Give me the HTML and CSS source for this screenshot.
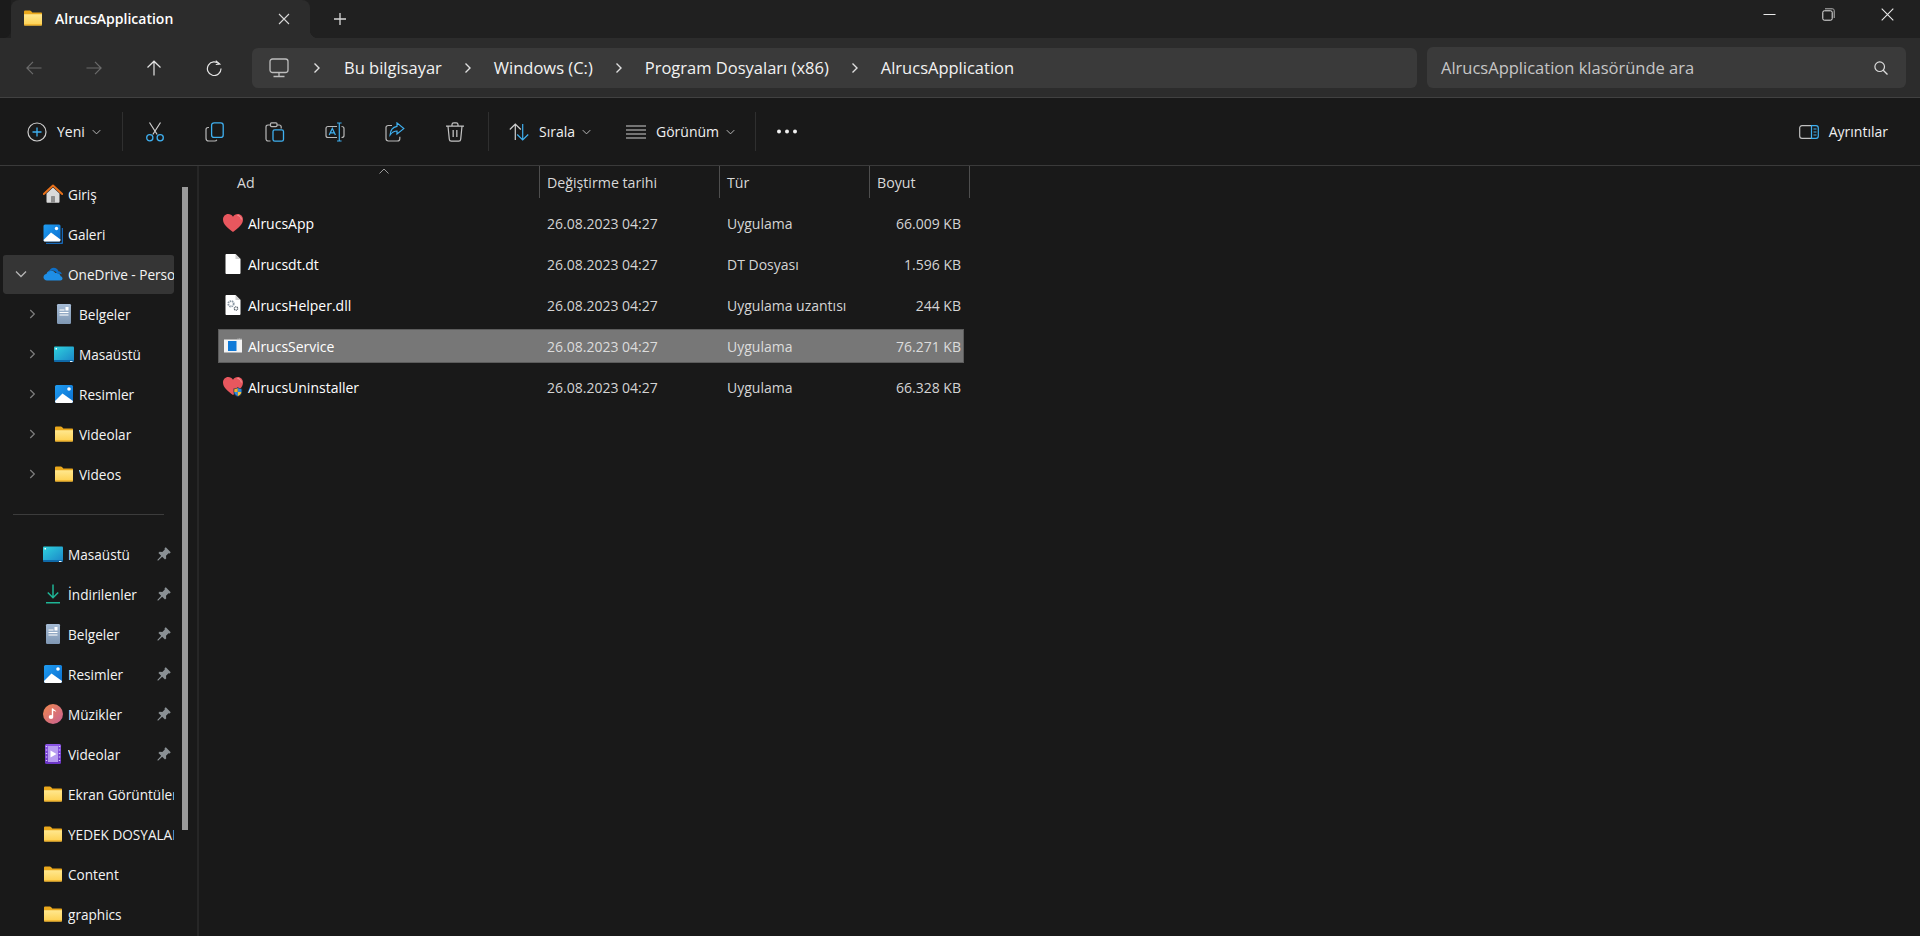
FILE: index.html
```html
<!DOCTYPE html>
<html lang="tr">
<head>
<meta charset="utf-8">
<title>AlrucsApplication</title>
<link rel="stylesheet" href="styles.css">
</head>
<body>
<svg class="defs" width="0" height="0" aria-hidden="true">
  <defs>
    <linearGradient id="gFolder" x1="0" y1="0" x2="0" y2="1"><stop offset="0" stop-color="#ffe88f"/><stop offset="1" stop-color="#fdd050"/></linearGradient>
    <linearGradient id="gDoc" x1="0" y1="0" x2="0" y2="1"><stop offset="0" stop-color="#a6bcd6"/><stop offset="1" stop-color="#7f97b3"/></linearGradient>
    <linearGradient id="gDesk" x1="0" y1="0" x2="1" y2="1"><stop offset="0" stop-color="#2fd3de"/><stop offset="1" stop-color="#1b86c8"/></linearGradient>
    <linearGradient id="gPic" x1="0" y1="0" x2="1" y2="1"><stop offset="0" stop-color="#1f9cf0"/><stop offset="1" stop-color="#0b6fd1"/></linearGradient>
    <linearGradient id="gMusic" x1="0" y1="0" x2="1" y2="1"><stop offset="0" stop-color="#f0894e"/><stop offset="1" stop-color="#c75f94"/></linearGradient>
    <linearGradient id="gVideo" x1="0" y1="0" x2="0" y2="1"><stop offset="0" stop-color="#8b56e6"/><stop offset="1" stop-color="#6a34c4"/></linearGradient>
    <symbol id="i-folder" viewBox="0 0 20 16">
      <path d="M1 1.800C1 1 1.600.5 2.300.5h4.500c.5 0 .9.2 1.200.6L9.300 2.500H18c.6 0 1 .4 1 1V6H1z" fill="#eaa81c"/>
      <path d="M1 4.200h18v10.200c0 .6-.4 1-1 1H2c-.6 0-1-.4-1-1z" fill="url(#gFolder)"/>
      <path d="M1 14.300h18v.2c0 .6-.4 1-1 1H2c-.6 0-1-.4-1-1z" fill="#eeb02a"/>
    </symbol>
    <symbol id="i-home" viewBox="0 0 20 20">
      <path d="M3.500 9.500 10 3.500l6.500 6v8.300c0 .6-.4 1-1 1h-11c-.6 0-1-.4-1-1z" fill="#d9d9d9"/>
      <path d="M8 18.800v-6c0-.4.3-.7.7-.7h2.600c.4 0 .7.3.7.7v6z" fill="#8e8e8e"/>
      <path d="M.8 10 10 1.500 19.200 10" fill="none" stroke="#e8701a" stroke-width="2" stroke-linecap="round" stroke-linejoin="round"/>
    </symbol>
    <symbol id="i-gallery" viewBox="0 0 20 20">
      <path d="M3 19.500h15c1 0 1.500-.6 1.500-1.500V4" fill="none" stroke="#1668b8" stroke-width="1.500"/>
      <rect x=".5" y=".5" width="17" height="17" rx="1.500" fill="url(#gPic)"/>
      <path d="M.5 16 8 8.500 17.500 15.500V16c0 .9-.6 1.500-1.500 1.500H2c-.9 0-1.500-.6-1.500-1.500z" fill="#fff"/>
      <circle cx="13.500" cy="4.500" r="1.700" fill="#fff"/>
    </symbol>
    <symbol id="i-cloud" viewBox="0 0 20 14">
      <path d="M4 13.500c-2 0-3.500-1.400-3.500-3.200C.5 8.600 1.800 7.300 3.400 7.100 4 4.800 5.900 3.500 8 3.500c1.900 0 3.400 1 4.200 2.600 2.900-.6 5.200 1 5.400 3.200 1.100.3 1.900 1.200 1.900 2.200 0 1.100-.9 2-2.100 2z" fill="#1e8ee6"/>
      <path d="M5.600 5.600C6.400 2.500 8.400.8 10.800.8c2.200 0 3.900 1.300 4.700 3.400 1.900.1 3 1.300 3.300 3.100-1.400-.5-2.900-.9-4.700-.9-1-1.700-2.700-2.800-4.700-2.800-1.300 0-2.700.6-3.800 2z" fill="#0f6fc6"/>
    </symbol>
    <symbol id="i-doc" viewBox="0 0 16 20">
      <rect x="1" y="0" width="14" height="20" rx="1.200" fill="url(#gDoc)"/>
      <path d="M3.500 6h5M3.500 8.500h9M3.500 11h9" stroke="#fff" stroke-width="1.100"/>
      <rect x="9.500" y="3" width="3" height="3.500" fill="#fff"/>
    </symbol>
    <symbol id="i-desktop" viewBox="0 0 20 16">
      <rect x="0" y=".5" width="20" height="14.500" rx="1" fill="url(#gDesk)"/>
      <path d="M0 14h20v1c0 .5-.4 1-1 1H1c-.6 0-1-.5-1-1z" fill="#0f6aa8"/>
      <rect x="1.500" y="2" width="1.500" height="1.500" fill="#fff"/>
      <rect x="16" y="15" width="2.500" height="1" fill="#e8f4ff"/>
    </symbol>
    <symbol id="i-pic" viewBox="-1 -1 20 20">
      <rect x="0" y="0" width="18" height="18" rx="1.500" fill="url(#gPic)"/>
      <path d="M0 16 7.500 8.500 18 16c0 1.200-.6 2-1.500 2h-15C.6 18 0 17.200 0 16z" fill="#fff"/>
      <circle cx="14" cy="4" r="1.800" fill="#fff"/>
    </symbol>
    <symbol id="i-down" viewBox="0 0 16 20">
      <path d="M8 .5v13M2.800 8.500 8 13.800l5.200-5.300M1 18.800h14" fill="none" stroke="#1fb596" stroke-width="1.500"/>
    </symbol>
    <symbol id="i-music" viewBox="0 0 20 20">
      <circle cx="10" cy="10" r="10" fill="url(#gMusic)"/>
      <path d="M9.500 4.500v8" stroke="#fff" stroke-width="1.400"/>
      <path d="M9.500 4.200c1.500 1.800 3.400 1.800 3.800 3.800-1.200-1-2.500-1.300-3.800-1.200z" fill="#fff"/>
      <ellipse cx="8" cy="13" rx="2.300" ry="2" fill="#fff"/>
    </symbol>
    <symbol id="i-video" viewBox="0 0 16 20">
      <rect x="0" y="0" width="16" height="20" rx="1.500" fill="url(#gVideo)"/>
      <rect x="3" y="2" width="10" height="16" fill="#b79cf0"/>
      <path d="M5.500 6.500 11.500 10l-6 3.500z" fill="#fff"/>
      <path d="M.8 2.500h1.400M.8 6h1.400M.8 9.500h1.400M.8 13h1.400M.8 16.500h1.400M13.800 2.500h1.400M13.800 6h1.400M13.800 9.500h1.400M13.800 13h1.400M13.800 16.500h1.400" stroke="#dcd0fa" stroke-width="1.100"/>
    </symbol>
    <symbol id="i-pin" viewBox="0 0 14 14">
      <path d="M8.800 .3 13.700 5.200 12.700 6.400 11.500 6.200 9 8.700 9.200 11.400 8 12.600 5.200 9.800 1 13.700.3 13 4.200 8.800 1.400 6 2.600 4.800 5.300 5 7.800 2.500 7.600 1.300z" fill="#8a9094"/>
    </symbol>
    <symbol id="i-heart" viewBox="0 0 20 18">
      <path d="M10 18C4.500 14 0 10.500 0 5.600 0 2.300 2.300 0 5.200 0 7.200 0 9 1 10 2.800 11 1 12.800 0 14.800 0 17.700 0 20 2.300 20 5.600 20 10.500 15.500 14 10 18z" fill="#e8575e"/>
      <path d="M14.500 1.500c2 0 3.800 1.500 3.800 4" fill="none" stroke="#f59a9c" stroke-width="1"/>
    </symbol>
    <symbol id="i-page" viewBox="0 0 16 20">
      <path d="M.5 1C.5.500.9 0 1.500 0h9L15.500 5v14c0 .5-.4 1-1 1h-13c-.6 0-1-.5-1-1z" fill="#fff"/>
      <path d="M10.500 0v5h5z" fill="#cfcfcf"/>
    </symbol>
    <symbol id="i-dll" viewBox="0 0 16 20">
      <use href="#i-page" width="16" height="20"/>
      <circle cx="6" cy="8.800" r="2.700" fill="none" stroke="#8d9aa6" stroke-width="1.800" stroke-dasharray="1.500 .7"/>
      <circle cx="11" cy="13.500" r="1.700" fill="none" stroke="#59636c" stroke-width="1.300" stroke-dasharray="1.100 .5"/>
    </symbol>
    <symbol id="i-service" viewBox="0 0 20 20">
      <rect x="1" y="3.500" width="18" height="13" fill="#f4f4f4"/>
      <rect x="5" y="5" width="8.500" height="10" fill="#0f7ad8"/>
      <path d="M15 2.500v1M16.500 2.500v1M18 2.500v1" stroke="#dcdcdc" stroke-width=".8"/>
    </symbol>
    <symbol id="i-uninstall" viewBox="0 0 20 20">
      <use href="#i-heart" width="20" height="18"/>
      <path d="M10.500 11.500c1.800 0 3.300-.5 4.300-1.500 1 1 2.500 1.500 4.400 1.500V15c0 2.500-2 4.300-4.400 5-2.400-.7-4.300-2.500-4.300-5z" fill="#1f3a55"/>
      <path d="M11.300 12.200c1.400 0 2.600-.4 3.500-1.100V15h-3.500z" fill="#f0b429"/>
      <path d="M14.800 11.100c.9.700 2.100 1.100 3.600 1.100V15h-3.600z" fill="#2a89e0"/>
      <path d="M11.300 15h3.500v4.100c-1.800-.6-3.300-2-3.500-4.100z" fill="#2a89e0"/>
      <path d="M14.800 15h3.600c-.2 2.100-1.800 3.500-3.600 4.100z" fill="#f5c33b"/>
    </symbol>
    <symbol id="i-chev-r" viewBox="0 0 10 12"><path d="M2.500 1.500 7 6l-4.500 4.500" fill="none" stroke="currentColor" stroke-width="1.400"/></symbol>
    <symbol id="i-chev-d" viewBox="0 0 12 8"><path d="M1 1.500 6 6.500l5-5" fill="none" stroke="currentColor" stroke-width="1.300"/></symbol>
  </defs>
</svg>

<div class="app">
  <header class="titlebar">
    <div class="tab-stub"></div>
    <div class="tab">
      <svg class="tab-folder"><use href="#i-folder"/></svg>
      <span class="tab-title">AlrucsApplication</span>
      <svg class="tab-x" viewBox="0 0 12 12"><path d="M1 1l10 10M11 1 1 11" stroke="#d8d8d8" stroke-width="1.100" fill="none"/></svg>
    </div>
    <svg class="tab-new" viewBox="0 0 14 14"><path d="M7 1v12M1 7h12" stroke="#d8d8d8" stroke-width="1.300" fill="none"/></svg>
    <div class="winctl">
      <span class="winbtn"><svg width="13" height="13" viewBox="0 0 13 13"><path d="M.5 6.500h12" stroke="#e8e8e8" stroke-width="1"/></svg></span>
      <span class="winbtn"><svg width="13" height="13" viewBox="0 0 13 13"><rect x=".8" y="2.800" width="9.400" height="9.400" rx="1.500" fill="none" stroke="#e8e8e8"/><path d="M3 .8h7.500c1 0 1.700.7 1.700 1.700V10" fill="none" stroke="#b8b8b8"/></svg></span>
      <span class="winbtn"><svg width="13" height="13" viewBox="0 0 13 13"><path d="M.7.700l11.600 11.600M12.300.7.700 12.300" stroke="#e8e8e8" stroke-width="1.100" fill="none"/></svg></span>
    </div>
  </header>

  <nav class="navbar">
    <div class="navbtns">
      <span class="navbtn"><svg viewBox="0 0 16 14"><path d="M15.500 7H1M7 .8.900 7 7 13.200" fill="none" stroke="#6b6b6b" stroke-width="1.200"/></svg></span>
      <span class="navbtn"><svg viewBox="0 0 16 14"><path d="M.5 7H15M9 .8 15.100 7 9 13.200" fill="none" stroke="#6b6b6b" stroke-width="1.200"/></svg></span>
      <span class="navbtn"><svg viewBox="0 0 16 16"><path d="M8 15.500V1.200M1.500 7.500 8 1.200l6.500 6.300" fill="none" stroke="#e4e4e4" stroke-width="1.200"/></svg></span>
      <span class="navbtn"><svg viewBox="0 0 16 16"><path d="M13.300 4.200A6.800 6.800 0 1 0 15 8.500" fill="none" stroke="#e4e4e4" stroke-width="1.200"/><path d="M9.700.8l4 3.300-3.900.4" fill="none" stroke="#e4e4e4" stroke-width="1.200"/></svg></span>
    </div>
    <div class="address">
      <svg class="pc" viewBox="0 0 20 20"><rect x="1" y="1" width="18" height="13.500" rx="2.500" fill="none" stroke="#bdbdbd" stroke-width="1.300"/><path d="M10 14.500V18M4.500 18.500h11" fill="none" stroke="#bdbdbd" stroke-width="1.300"/></svg>
      <svg class="crumb-sep crumb-first"><use href="#i-chev-r"/></svg><span class="crumb">Bu bilgisayar</span>
      <svg class="crumb-sep"><use href="#i-chev-r"/></svg><span class="crumb">Windows (C:)</span>
      <svg class="crumb-sep"><use href="#i-chev-r"/></svg><span class="crumb">Program Dosyaları (x86)</span>
      <svg class="crumb-sep"><use href="#i-chev-r"/></svg><span class="crumb">AlrucsApplication</span>
    </div>
    <div class="search">
      <span class="search-text">AlrucsApplication klasöründe ara</span>
      <svg class="search-ico" viewBox="0 0 14 14"><circle cx="5.700" cy="5.700" r="4.800" fill="none" stroke="#dcdcdc" stroke-width="1.200"/><path d="M9.200 9.200l4.300 4.300" stroke="#dcdcdc" stroke-width="1.300"/></svg>
    </div>
  </nav>

  <section class="toolbar">
    <div class="tool tool-new">
      <svg class="ico20" viewBox="0 0 20 20"><circle cx="10" cy="10" r="9" fill="none" stroke="#cfcfcf" stroke-width="1.200"/><path d="M10 5.500v9M5.500 10h9" stroke="#3fb0f0" stroke-width="1.300"/></svg>
      <span class="tool-label">Yeni</span>
      <svg class="caret"><use href="#i-chev-d"/></svg>
    </div>
    <div class="tsep tsep-a"></div>
    <div class="tool-icon"><svg class="ico20" viewBox="0 0 20 20"><path d="M15.500 .5 7.800 12.500M4.500 .5l7.700 12" fill="none" stroke="#cfcfcf" stroke-width="1.200"/><circle cx="4.800" cy="15.800" r="3.100" fill="none" stroke="#3fb0f0" stroke-width="1.300"/><circle cx="15.200" cy="15.800" r="3.100" fill="none" stroke="#3fb0f0" stroke-width="1.300"/></svg></div>
    <div class="tool-icon"><svg class="ico20" viewBox="0 0 20 20"><path d="M4 5.500H3C1.700 5.500 1 6.400 1 7.600v8.600c0 1.700 1 2.800 2.800 2.800h6c1 0 1.700-.5 2-1.300" fill="none" stroke="#b8b8b8" stroke-width="1.200"/><rect x="6.600" y=".8" width="11.600" height="14.600" rx="2.500" fill="none" stroke="#3fb0f0" stroke-width="1.300"/></svg></div>
    <div class="tool-icon"><svg class="ico20" viewBox="0 0 20 20"><path d="M5.500 19H3.200C1.700 19 1 18 1 16.800V5c0-1.300.8-2 2-2h2.500M12 3h2.200c1.200 0 2 .7 2 2v1.500" fill="none" stroke="#b8b8b8" stroke-width="1.200"/><rect x="5.500" y=".8" width="6.500" height="3.800" rx="1" fill="none" stroke="#b8b8b8" stroke-width="1.200"/><rect x="8" y="7.800" width="10.500" height="11.400" rx="1.800" fill="none" stroke="#3fb0f0" stroke-width="1.300"/></svg></div>
    <div class="tool-icon"><svg class="ico20" viewBox="0 0 20 20"><path d="M12 4.500H3C1.700 4.500 1 5.300 1 6.500v7c0 1.200.7 2 2 2h9M16.500 4.500c1.500 0 2.500.8 2.500 2v7c0 1.200-1 2-2.500 2" fill="none" stroke="#b8b8b8" stroke-width="1.200"/><path d="M14.300 1v18M12 1h4.600M12 19h4.600" stroke="#3fb0f0" stroke-width="1.200" fill="none"/><path d="M4.200 13 7.300 6.500 10.400 13M5.300 10.800h4" fill="none" stroke="#3fb0f0" stroke-width="1.200"/></svg></div>
    <div class="tool-icon"><svg class="ico20" viewBox="0 0 20 20"><path d="M7 3.500H3.200C1.800 3.500 1 4.400 1 5.600v11c0 1.500.8 2.400 2.300 2.400h9c1.600 0 2.500-.8 2.500-2.300v-2" fill="none" stroke="#b8b8b8" stroke-width="1.200"/><path d="M12 .9 18.800 6.600 12 12V9C8.800 9 6.900 10.400 5.100 13 5.300 8.400 8 5 12 4.300z" fill="none" stroke="#3fb0f0" stroke-width="1.200"/></svg></div>
    <div class="tool-icon"><svg class="ico20" viewBox="0 0 20 20"><path d="M1 4.200h18M7 4V2.500C7 1.400 7.800.8 8.800.8h2.400c1 0 1.800.6 1.800 1.700V4M3 4.200l1.300 13c.1 1.200.8 2 2 2h7.400c1.200 0 1.900-.8 2-2l1.300-13" fill="none" stroke="#c4c4c4" stroke-width="1.200"/><path d="M8.200 8v7M11.800 8v7" stroke="#a8a8a8" stroke-width="1.500"/></svg></div>
    <div class="tsep tsep-b"></div>
    <div class="tool tool-sort">
      <svg class="ico20" viewBox="0 0 20 20"><path d="M6.300 18V2.200M.8 7.500 6.300 2l5.500 5.500" fill="none" stroke="#cfcfcf" stroke-width="1.200"/><path d="M13.700 2v16M8.200 12.500l5.500 5.500 5.500-5.500" fill="none" stroke="#3fb0f0" stroke-width="1.200"/></svg>
      <span class="tool-label">Sırala</span>
      <svg class="caret"><use href="#i-chev-d"/></svg>
    </div>
    <div class="tool tool-view">
      <svg class="ico20" viewBox="0 0 20 14"><path d="M0 1h20M0 5h20M0 9h20M0 13h20" stroke="#cfcfcf" stroke-width="1.200"/></svg>
      <span class="tool-label">Görünüm</span>
      <svg class="caret"><use href="#i-chev-d"/></svg>
    </div>
    <div class="tsep"></div>
    <svg class="dots" viewBox="0 0 22 5"><circle cx="3" cy="2.500" r="2" fill="#f0f0f0"/><circle cx="11" cy="2.500" r="2" fill="#f0f0f0"/><circle cx="19" cy="2.500" r="2" fill="#f0f0f0"/></svg>
    <div class="tool tool-details">
      <svg class="ico20" viewBox="0 0 20 14"><path d="M12.500.7H3C1.600.7.700 1.600.7 3v8c0 1.400.9 2.300 2.300 2.300h9.500" fill="none" stroke="#c0c0c0" stroke-width="1.200"/><path d="M12.500.7h4.500c1.400 0 2.300.9 2.300 2.300v8c0 1.400-.9 2.300-2.300 2.300h-4.500z" fill="none" stroke="#3fb0f0" stroke-width="1.200"/><path d="M14.500 4h3M14.500 7h3M14.500 10h3" stroke="#3fb0f0" stroke-width="1.100"/></svg>
      <span class="tool-label">Ayrıntılar</span>
    </div>
  </section>

  <main class="main">
    <aside class="sidebar">
      <div class="scrollthumb"></div>
      <div class="tree">
        <div class="row l1"><span class="chev"></span><svg class="ic"><use href="#i-home"/></svg><span class="lbl">Giriş</span></div>
        <div class="row l1"><span class="chev"></span><svg class="ic"><use href="#i-gallery"/></svg><span class="lbl">Galeri</span></div>
        <div class="row l1 active"><span class="chev"><svg class="chev-down"><use href="#i-chev-d"/></svg></span><svg class="ic"><use href="#i-cloud"/></svg><span class="lbl">OneDrive - Personal</span></div>
        <div class="row l2"><span class="chev"><svg class="chev-right"><use href="#i-chev-r"/></svg></span><svg class="ic"><use href="#i-doc"/></svg><span class="lbl">Belgeler</span></div>
        <div class="row l2"><span class="chev"><svg class="chev-right"><use href="#i-chev-r"/></svg></span><svg class="ic"><use href="#i-desktop"/></svg><span class="lbl">Masaüstü</span></div>
        <div class="row l2"><span class="chev"><svg class="chev-right"><use href="#i-chev-r"/></svg></span><svg class="ic"><use href="#i-pic"/></svg><span class="lbl">Resimler</span></div>
        <div class="row l2"><span class="chev"><svg class="chev-right"><use href="#i-chev-r"/></svg></span><svg class="ic"><use href="#i-folder"/></svg><span class="lbl">Videolar</span></div>
        <div class="row l2"><span class="chev"><svg class="chev-right"><use href="#i-chev-r"/></svg></span><svg class="ic"><use href="#i-folder"/></svg><span class="lbl">Videos</span></div>
      </div>
      <div class="divider"></div>
      <div class="tree">
        <div class="row l1"><span class="chev"></span><svg class="ic"><use href="#i-desktop"/></svg><span class="lbl">Masaüstü</span><svg class="pin"><use href="#i-pin"/></svg></div>
        <div class="row l1"><span class="chev"></span><svg class="ic"><use href="#i-down"/></svg><span class="lbl">İndirilenler</span><svg class="pin"><use href="#i-pin"/></svg></div>
        <div class="row l1"><span class="chev"></span><svg class="ic"><use href="#i-doc"/></svg><span class="lbl">Belgeler</span><svg class="pin"><use href="#i-pin"/></svg></div>
        <div class="row l1"><span class="chev"></span><svg class="ic"><use href="#i-pic"/></svg><span class="lbl">Resimler</span><svg class="pin"><use href="#i-pin"/></svg></div>
        <div class="row l1"><span class="chev"></span><svg class="ic"><use href="#i-music"/></svg><span class="lbl">Müzikler</span><svg class="pin"><use href="#i-pin"/></svg></div>
        <div class="row l1"><span class="chev"></span><svg class="ic"><use href="#i-video"/></svg><span class="lbl">Videolar</span><svg class="pin"><use href="#i-pin"/></svg></div>
        <div class="row l1"><span class="chev"></span><svg class="ic"><use href="#i-folder"/></svg><span class="lbl">Ekran Görüntüleri</span></div>
        <div class="row l1"><span class="chev"></span><svg class="ic"><use href="#i-folder"/></svg><span class="lbl">YEDEK DOSYALAR</span></div>
        <div class="row l1"><span class="chev"></span><svg class="ic"><use href="#i-folder"/></svg><span class="lbl">Content</span></div>
        <div class="row l1"><span class="chev"></span><svg class="ic"><use href="#i-folder"/></svg><span class="lbl">graphics</span></div>
      </div>
    </aside>

    <section class="files">
      <div class="head">
        <svg class="sort-caret" viewBox="0 0 10 6"><path d="M.5 5.500 5 1l4.500 4.500" fill="none" stroke="#9a9a9a"/></svg>
        <div class="hcell hname">Ad</div>
        <div class="hcell hdate">Değiştirme tarihi</div>
        <div class="hcell htype">Tür</div>
        <div class="hcell hsize">Boyut</div>
      </div>
      <div class="file">
        <div class="fname"><svg class="fic"><use href="#i-heart"/></svg>AlrucsApp</div>
        <div class="fcell">26.08.2023 04:27</div><div class="fcell">Uygulama</div><div class="fsize">66.009 KB</div>
      </div>
      <div class="file">
        <div class="fname"><svg class="fic"><use href="#i-page"/></svg>Alrucsdt.dt</div>
        <div class="fcell">26.08.2023 04:27</div><div class="fcell">DT Dosyası</div><div class="fsize">1.596 KB</div>
      </div>
      <div class="file">
        <div class="fname"><svg class="fic"><use href="#i-dll"/></svg>AlrucsHelper.dll</div>
        <div class="fcell">26.08.2023 04:27</div><div class="fcell">Uygulama uzantısı</div><div class="fsize">244 KB</div>
      </div>
      <div class="file selected">
        <div class="fname"><svg class="fic"><use href="#i-service"/></svg>AlrucsService</div>
        <div class="fcell">26.08.2023 04:27</div><div class="fcell">Uygulama</div><div class="fsize">76.271 KB</div>
      </div>
      <div class="file">
        <div class="fname"><svg class="fic"><use href="#i-uninstall"/></svg>AlrucsUninstaller</div>
        <div class="fcell">26.08.2023 04:27</div><div class="fcell">Uygulama</div><div class="fsize">66.328 KB</div>
      </div>
    </section>
  </main>
</div>
</body>
</html>
```

FILE: styles.css
```css
* { box-sizing: border-box; }
html, body { margin: 0; padding: 0; background: #191919; }
body { font-family: "Open Sans", "Noto Sans", "Liberation Sans", sans-serif; color: #fff; overflow: hidden; }
.defs { position: absolute; }
.app { width: 1920px; height: 936px; display: flex; flex-direction: column; overflow: hidden; background: #191919; }

/* title bar */
.titlebar { height: 38px; display: flex; align-items: center; background: #202020; flex: none; }
.tab-stub { width: 11px; height: 38px; background: #1b1b1b; border-bottom-right-radius: 8px; }
.tab { position: relative; width: 299px; height: 38px; display: flex; align-items: center; background: #2c2c2c; border-radius: 8px 8px 0 0; padding-left: 12px; }
.tab::after { content: ""; position: absolute; left: 100%; bottom: 0; width: 8px; height: 8px; background: radial-gradient(circle at 100% 0, transparent 8px, #2c2c2c 8.500px); }
.tab-folder { width: 20px; height: 16px; flex: none; margin-top: -2px; }
.tab-title { margin: -2px 0 0 12px; font-size: 14px; font-weight: 600; color: #fff; }
.tab-x { width: 12px; height: 12px; margin-left: auto; margin-right: 20px; }
.tab-new { width: 14px; height: 14px; margin-left: 23px; }
.winctl { margin-left: auto; display: flex; padding-right: 3px; margin-top: -10px; }
.winbtn { width: 59px; display: flex; justify-content: center; }

/* nav bar */
.navbar { height: 60px; flex: none; display: flex; align-items: center; background: #2c2c2c; border-bottom: 1px solid #414141; padding: 0 14px 0 0; }
.navbtns { display: flex; width: 252px; padding-left: 4px; }
.navbtn { width: 60px; height: 40px; display: flex; align-items: center; justify-content: center; }
.navbtn svg { width: 16px; height: 16px; }
.address { width: 1165px; height: 40px; background: #3a3a3a; border-radius: 6px; display: flex; align-items: center; padding-left: 17px; }
.pc { width: 20px; height: 20px; flex: none; }
.crumb-sep { width: 10px; height: 12px; color: #e0e0e0; flex: none; margin: 0 21px; }
.crumb-first { margin: 0 22px 0 23px; }
.crumb { font-size: 16.500px; line-height: 24px; color: #f2f2f2; white-space: nowrap; }
.search { width: 479px; height: 41px; margin-left: 10px; background: #3a3a3a; border-radius: 6px; display: flex; align-items: center; padding: 0 18px 0 14px; }
.search-text { font-size: 16.500px; line-height: 24px; color: #c6c6c6; white-space: nowrap; }
.search-ico { width: 14px; height: 14px; margin-left: auto; }

/* tool bar */
.toolbar { height: 68px; flex: none; display: flex; align-items: center; background: #191919; border-bottom: 1px solid #3a3a3a; padding-left: 27px; }
.ico20 { width: 20px; height: 20px; flex: none; display: block; }
.tool { display: flex; align-items: center; height: 40px; }
.tool-label { font-size: 14px; color: #f0f0f0; margin-left: 10px; }
.caret { width: 9px; height: 6px; margin-left: 7px; color: #bdbdbd; flex: none; }
.tool-new { width: 95px; }
.tsep { width: 1px; height: 39px; background: #2f2f2f; flex: none; }
.tsep-a { margin-right: 2px; }
.tsep-b { margin-left: 3px; }
.tool-icon { width: 60px; height: 40px; display: flex; align-items: center; justify-content: center; flex: none; }
.tool-sort { width: 137px; padding-left: 20px; }
.tool-view { width: 129px; }
.dots { width: 22px; height: 5px; margin-left: 20px; }
.tool-details { margin-left: auto; padding-right: 32px; }

/* main */
.main { flex: 1; display: flex; min-height: 0; }
.sidebar { position: relative; width: 199px; flex: none; border-right: 2px solid #262626; padding-top: 8px; }
.scrollthumb { position: absolute; left: 182px; top: 21px; width: 6px; height: 643px; background: #9a9a9a; }
.tree { display: flex; flex-direction: column; }
.row { width: 171px; height: 40px; margin-left: 3px; display: flex; align-items: center; overflow: hidden; white-space: nowrap; font-size: 13.600px; color: #f4f4f4; border-radius: 3px; }
.row.l1 { padding-left: 8px; }
.row.l2 { padding-left: 19px; }
.row.active { background: #353535; background-clip: padding-box; border-top: 1px solid transparent; padding-bottom: 1px; }
.chev { width: 20px; height: 20px; flex: none; display: flex; align-items: center; justify-content: center; }
.chev-down { width: 12px; height: 8px; color: #b5b5b5; }
.chev-right { width: 9px; height: 12px; color: #7d7d7d; }
.ic { width: 20px; height: 20px; margin-left: 12px; flex: none; }
.lbl { margin-left: 5px; flex: 1; overflow: hidden; min-width: 0; }
.pin { width: 14px; height: 14px; flex: none; margin: 0 3px 0 5px; }
.divider { width: 151px; height: 1px; margin: 20px 0 19px 13px; background: #3c3c3c; }

/* files */
.files { flex: 1; padding-left: 19px; font-size: 14px; position: relative; }
.head { display: grid; grid-template-columns: 322px 180px 150px 100px; height: 32px; width: 752px; position: relative; font-size: 14.200px; }
.sort-caret { position: absolute; left: 161px; top: 2px; width: 10px; height: 6px; }
.hcell { border-right: 1px solid #4e4e4e; padding: 1px 0 0 7px; line-height: 31px; color: #d8d8d8; }
.hname { padding-left: 19px; }
.file { display: grid; grid-template-columns: 322px 180px 150px 93px; align-items: center; width: 746px; height: 34px; margin-top: 7px; color: #d4d4d4; border: 1px solid transparent; padding-top: 1px; }
.head + .file { margin-top: 8px; }
.fname { display: flex; align-items: center; color: #fff; padding-left: 4px; white-space: nowrap; }
.fic { width: 20px; height: 20px; margin-right: 5px; flex: none; margin-top: -2px; }
.fcell { padding-left: 6px; white-space: nowrap; }
.fsize { text-align: right; padding-right: 3px; white-space: nowrap; }
.selected { background: #777; border-color: #5c5c5c; color: #dcdcdc; }
```
